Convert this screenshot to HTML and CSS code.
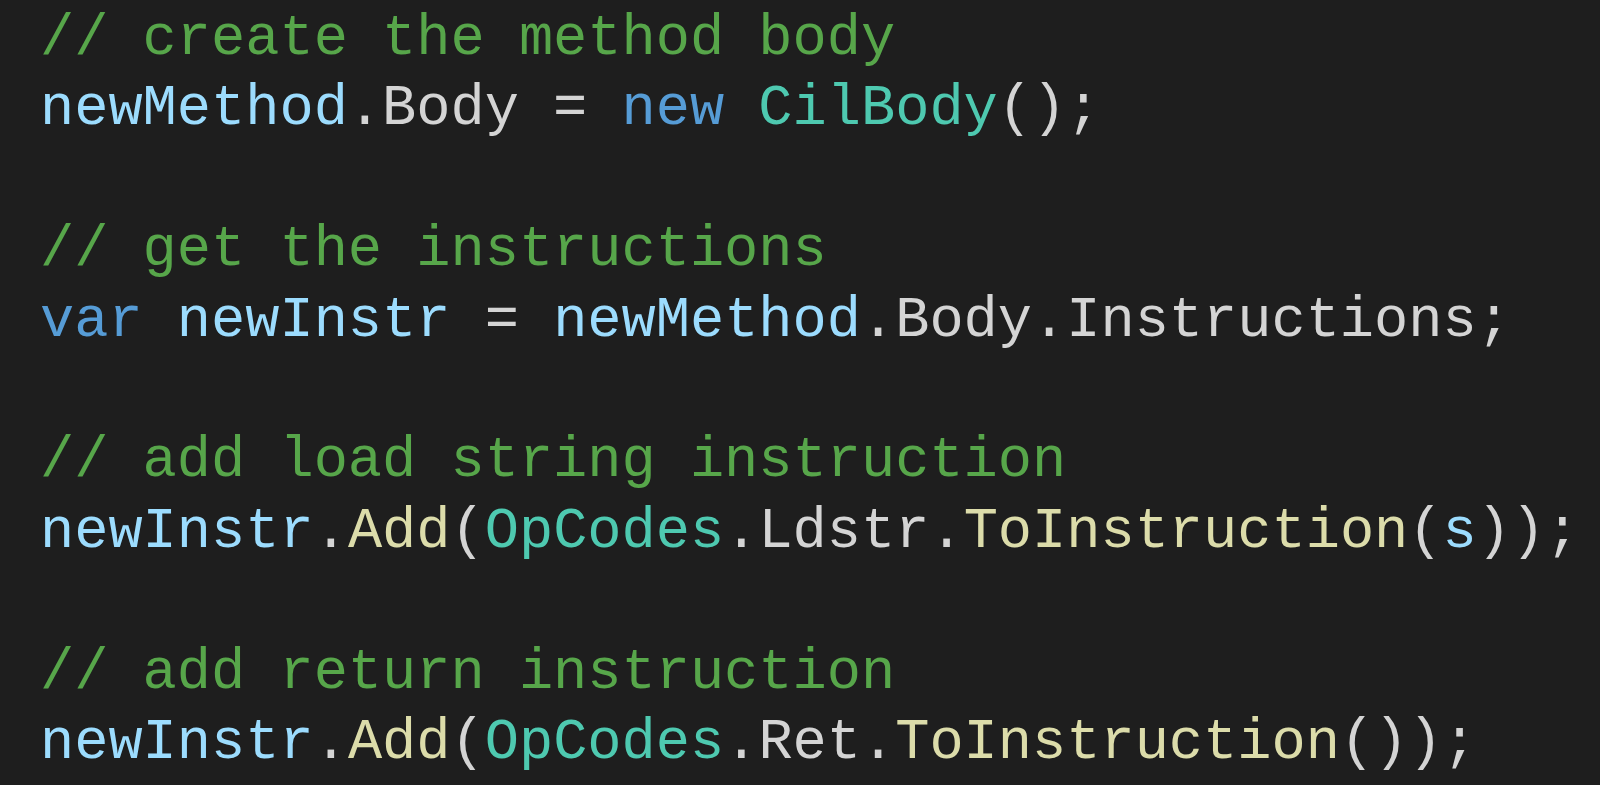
FILE: index.html
```html
<!DOCTYPE html>
<html>
<head>
<meta charset="utf-8">
<link rel="stylesheet" href="styles.css">
</head>
<body>
<div class="code">
<div class="line"><span class="cm">// create the method body</span></div>
<div class="line"><span class="vr">newMethod</span><span class="pl">.Body = </span><span class="kw">new</span> <span class="ty">CilBody</span><span class="pl">();</span></div>
<div class="line"></div>
<div class="line"><span class="cm">// get the instructions</span></div>
<div class="line"><span class="kw">var</span> <span class="vr">newInstr</span><span class="pl"> = </span><span class="vr">newMethod</span><span class="pl">.Body.Instructions;</span></div>
<div class="line"></div>
<div class="line"><span class="cm">// add load string instruction</span></div>
<div class="line"><span class="vr">newInstr</span><span class="pl">.</span><span class="fn">Add</span><span class="pl">(</span><span class="ty">OpCodes</span><span class="pl">.Ldstr.</span><span class="fn">ToInstruction</span><span class="pl">(</span><span class="vr">s</span><span class="pl">));</span></div>
<div class="line"></div>
<div class="line"><span class="cm">// add return instruction</span></div>
<div class="line"><span class="vr">newInstr</span><span class="pl">.</span><span class="fn">Add</span><span class="pl">(</span><span class="ty">OpCodes</span><span class="pl">.Ret.</span><span class="fn">ToInstruction</span><span class="pl">());</span></div>
</div>
</body>
</html>
```
FILE: styles.css
```css
html, body {
  margin: 0;
  padding: 0;
  background: #1e1e1e;
  height: 100%;
  overflow: hidden;
}
.code {
  padding: 4px 0 0 40px;
  font-family: "Liberation Mono", "Courier New", monospace;
  font-size: 57px;
  color: #d4d4d4;
}
.line { height: 70.4px; line-height: 70.4px; white-space: pre; }
.cm { color: #57a64a; }
.kw { color: #569cd6; }
.vr { color: #9cdcfe; }
.ty { color: #4ec9b0; }
.fn { color: #dcdcaa; }
.pl { color: #d4d4d4; }
```
